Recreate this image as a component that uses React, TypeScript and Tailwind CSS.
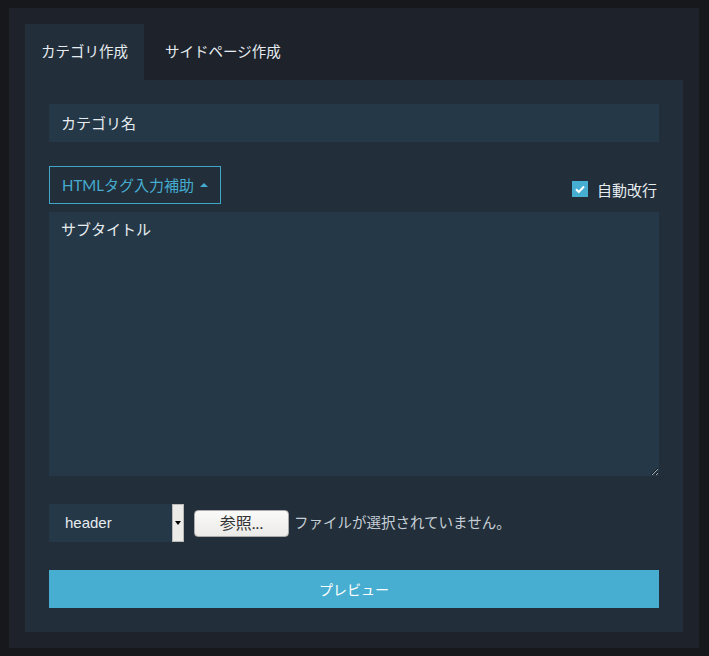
import React from 'react';

const jp = 'font-["Lato","Noto_Sans_CJK_JP",sans-serif]';

const App: React.FC = () => {
  return (
    <div className={`w-[709px] h-[656px] bg-[#17181c] pt-2 pl-[9px] ${jp}`}>
      <div className="w-[690px] h-[640px] bg-[#1d222b] pt-4 px-4">
        {/* tabs */}
        <div className="flex h-14 text-[14.5px] text-[#e6ecf0]">
          <div className="w-[119px] bg-[#222e39] flex items-center justify-center">カテゴリ作成</div>
          <div className="px-[21px] flex items-center">サイドページ作成</div>
        </div>

        <div className="w-[658px] h-[552px] bg-[#222e39] px-6 pt-6">
          <input
            className="w-[610px] h-[38px] bg-[#253847] px-3 text-[15px] text-[#e6ecf0] placeholder:text-[#e6ecf0] outline-none"
            placeholder="カテゴリ名"
          />

          <div className="flex items-end justify-between mt-6 mb-2">
            <button className="h-[38px] px-3 border border-[#3fa6c9] text-[#45acd0] text-[15px] flex items-center gap-[6px]">
              HTMLタグ入力補助
              <span className="w-0 h-0 border-x-4 border-x-transparent border-b-4 border-b-[#45acd0]" />
            </button>
            <label className="flex items-center gap-[9px] text-[15px] text-[#e6ecf0] mb-[3px] mr-[2px]">
              <span className="w-4 h-4 bg-[#46aed1] flex items-center justify-center mt-[2px]">
                <svg width="10" height="8" viewBox="0 0 10 8">
                  <path d="M1 4.2 L3.8 7 L9 1.5" stroke="white" strokeWidth="2" fill="none" />
                </svg>
              </span>
              <span className="mt-[3px]">自動改行</span>
            </label>
          </div>

          <textarea
            className="block w-[610px] h-[264px] bg-[#253847] px-3 py-[6px] text-[15px] text-[#e6ecf0] placeholder:text-[#e6ecf0] outline-none"
            placeholder="サブタイトル"
          />

          <div className="flex items-center mt-7 h-[38px]">
            <div className="flex h-[38px]">
              <div className="w-[123px] bg-[#253847] pl-4 flex items-center text-[15px] text-[#e6ecf0] font-['Liberation_Sans',sans-serif]">
                header
              </div>
              <div className="w-3 bg-[#ecebe8] border border-[#b9b9b9] flex items-center justify-center">
                <span className="w-0 h-0 border-x-[3px] border-x-transparent border-t-[4px] border-t-black" />
              </div>
            </div>
            <div className="ml-[10px] w-[95px] h-[27px] rounded-[4px] border border-[#aaa] bg-gradient-to-b from-[#fafafa] to-[#ebeae7] flex items-center justify-center text-[16px] text-[#333]">
              参照...
            </div>
            <span className="ml-[5px] text-[14.5px] text-[#c5ced6]">ファイルが選択されていません。</span>
          </div>

          <button className="mt-7 w-[610px] h-[38px] bg-[#47aed1] text-white text-[14px]">
            プレビュー
          </button>
        </div>
      </div>
    </div>
  );
};

export default App;
